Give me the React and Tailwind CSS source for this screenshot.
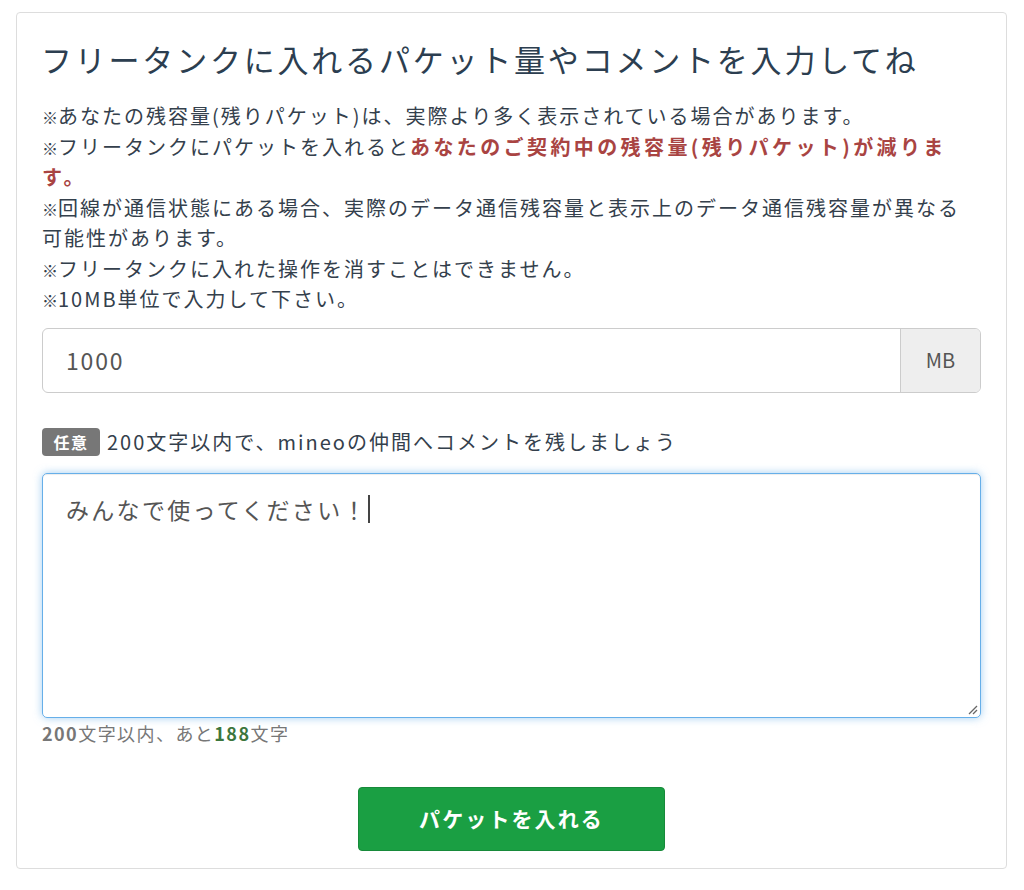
export default function App() {
  const font = { fontFamily: '"Noto Sans CJK JP", "Noto Sans", sans-serif' };
  const Mark = () => <span className="text-[16px] leading-none tracking-normal">※</span>;
  return (
    <div className="w-[1024px] h-[890px] bg-white pt-[12px] pl-[16px]" style={font}>
      <div className="w-[991px] h-[857px] border border-[#dddddd] rounded-[4px] px-[25px] pt-[24px] pb-[15px] flex flex-col">
        <h1 className="text-[31px] leading-[44px] tracking-[0.09em] text-[#2c3e50] font-normal -ml-[1px]">
          フリータンクに入れるパケット量やコメントを入力してね
        </h1>
        <div className="mt-[20px] text-[20px] leading-[30.5px] tracking-[0.1em] text-[#34404c]">
          <p><Mark />あなたの残容量(残りパケット)は、実際より多く表示されている場合があります。</p>
          <p>
            <Mark />フリータンクにパケットを入れると
            <span className="font-bold text-[#a94442] tracking-[0.17em]">あなたのご契約中の残容量(残りパケット)が減ります。</span>
          </p>
          <p><Mark />回線が通信状態にある場合、実際のデータ通信残容量と表示上のデータ通信残容量が異なる可能性があります。</p>
          <p><Mark />フリータンクに入れた操作を消すことはできません。</p>
          <p><Mark />10MB単位で入力して下さい。</p>
        </div>

        <div className="mt-[13px] flex h-[65px] shrink-0 border border-[#cccccc] rounded-[6px] overflow-hidden">
          <div className="flex-1 flex items-center pl-[23px] text-[23px] tracking-[0.08em] text-[#555555]">1000</div>
          <div className="w-[80px] border-l border-[#cccccc] bg-[#eeeeee] flex items-center justify-center text-[20px] text-[#555555]">MB</div>
        </div>

        <div className="mt-[34px] flex items-center h-[30px]">
          <span className="h-[28px] w-[58px] bg-[#777777] rounded-[4px] text-white text-[16px] leading-none font-bold tracking-[0.1em] flex items-center justify-center">任意</span>
          <span className="ml-[7px] text-[20px] leading-[30px] tracking-[0.1em] text-[#34404c]">200文字以内で、mineoの仲間へコメントを残しましょう</span>
        </div>

        <div className="relative mt-[16px] h-[245px] shrink-0 border border-[#66afe9] rounded-[5px] shadow-[inset_0_1px_1px_rgba(0,0,0,0.075),0_0_8px_rgba(102,175,233,0.6)] pl-[23px] pt-[18px]">
          <div className="flex items-center text-[23px] leading-[34px] tracking-[0.1em] text-[#555555]">
            <span>みんなで使ってください！</span>
            <span className="inline-block w-[2px] h-[28px] bg-[#444444]"></span>
          </div>
          <svg className="absolute right-[2px] bottom-[2px]" width="12" height="12" viewBox="0 0 12 12">
            <line x1="11" y1="3" x2="3" y2="11" stroke="#666" strokeWidth="1.2" />
            <line x1="11" y1="7" x2="7" y2="11" stroke="#666" strokeWidth="1.2" />
          </svg>
        </div>

        <div className="mt-[3px] text-[18px] leading-[24px] tracking-[0.08em] text-[#777777]">
          <span className="font-bold">200</span>文字以内、あと<span className="font-bold text-[#3c763d]">188</span>文字
        </div>

        <div className="mt-[42px] flex justify-center">
          <button className="w-[307px] h-[64px] bg-[#1a9f43] border border-[#178a3a] rounded-[4px] text-white text-[21px] font-bold tracking-[0.1em]">
            パケットを入れる
          </button>
        </div>
      </div>
    </div>
  );
}
